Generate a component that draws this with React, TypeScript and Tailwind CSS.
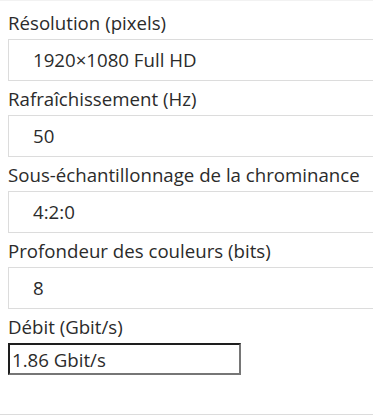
import React from "react";

type Field = { label: string; value: string };

const fields: Field[] = [
  { label: "Résolution (pixels)", value: "1920×1080 Full HD" },
  { label: "Rafraîchissement (Hz)", value: "50" },
  { label: "Sous-échantillonnage de la chrominance", value: "4:2:0" },
  { label: "Profondeur des couleurs (bits)", value: "8" },
];

function FieldLabel({ children }: { children: React.ReactNode }) {
  return <div className="pt-[5px] pb-[3px] text-[18.67px] leading-[26px] whitespace-nowrap">{children}</div>;
}

function SelectBox({ value }: { value: string }) {
  return (
    <div className="h-[42px] flex items-center pl-6 border border-r-0 border-[#dcdcdc] bg-white text-[18.67px] whitespace-nowrap">
      {value}
    </div>
  );
}

export default function App() {
  return (
    <div className="w-[373px] h-[417px] flex flex-col bg-white border-t border-[#f2f2f2] overflow-hidden font-['Open_Sans',sans-serif] text-[#2b2b2b]">
      <div className="pl-2 pt-[4px]">
        {fields.map((f) => (
          <div key={f.label}>
            <FieldLabel>{f.label}</FieldLabel>
            <SelectBox value={f.value} />
          </div>
        ))}
        <FieldLabel>Débit (Gbit/s)</FieldLabel>
        <input
          readOnly
          value="1.86 Gbit/s"
          className="block w-[233px] h-[32px] px-[2px] border-2 border-t-[#1e1e1e] border-l-[#1e1e1e] border-r-[#767676] border-b-[#767676] text-[18.67px] text-[#2b2b2b] outline-none"
        />
      </div>
      <div className="mt-auto mb-[2px] border-b border-[#dcdcdc]" />
    </div>
  );
}
